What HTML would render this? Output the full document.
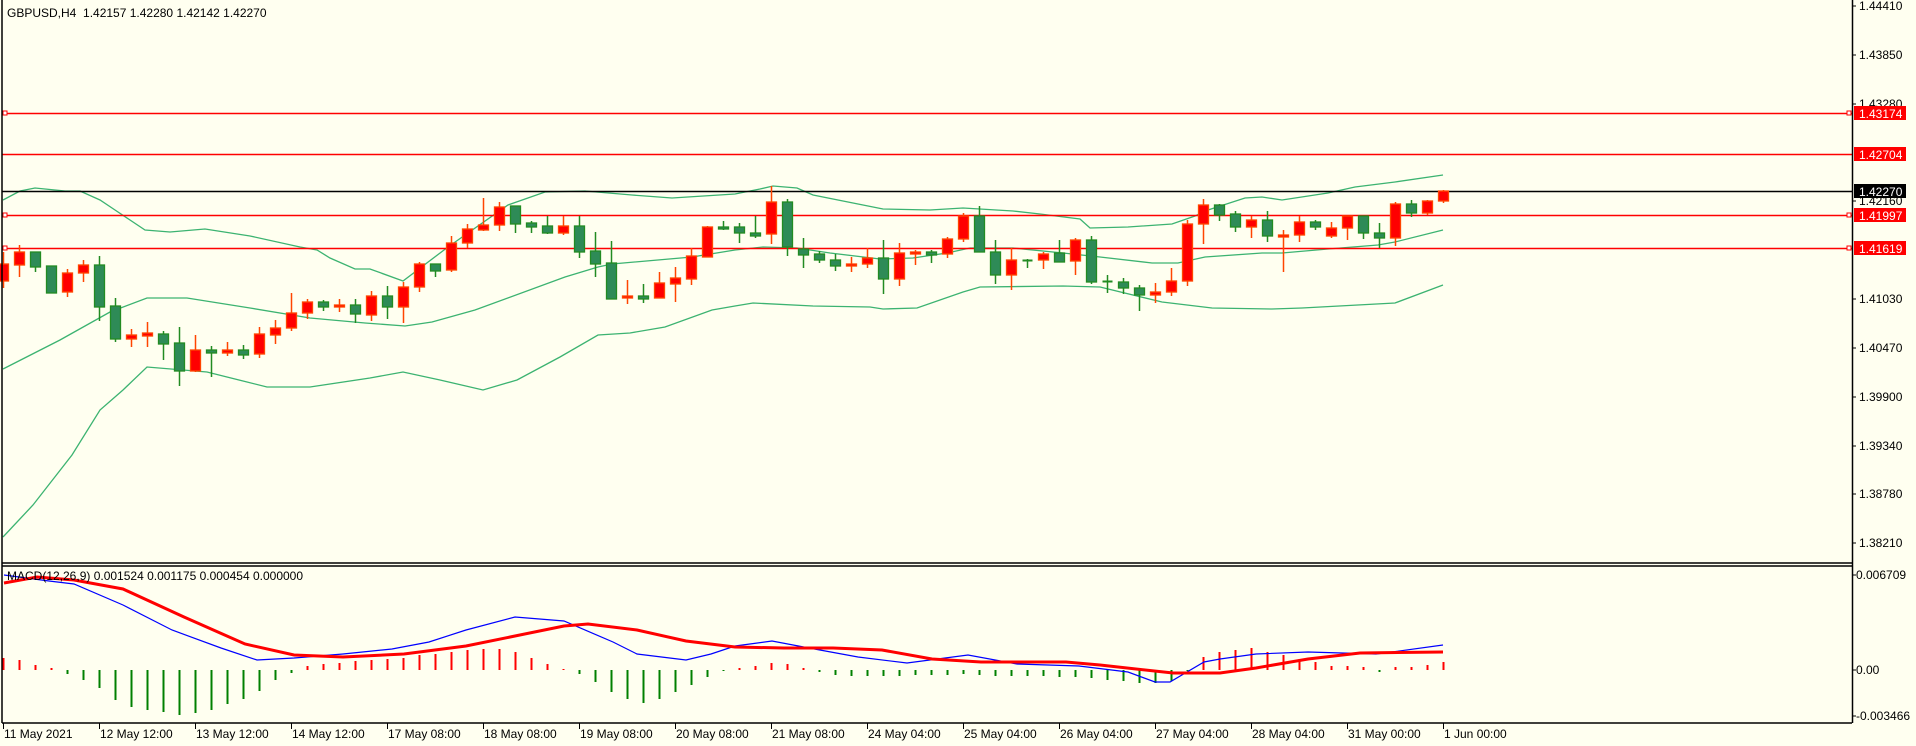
<!DOCTYPE html>
<html><head><meta charset="utf-8"><style>
html,body{margin:0;padding:0;background:#fffff0;}
svg{display:block;font-family:"Liberation Sans",sans-serif;font-size:12px;}
</style></head><body>
<svg id="s" width="1916" height="746" viewBox="0 0 1916 746" xmlns="http://www.w3.org/2000/svg">
<rect x="0" y="0" width="1916" height="746" fill="#fffff0"/>
<g id="bands" fill="none" stroke="#3cb371" stroke-width="1.3"></g>
<g id="hl">
<line x1="2" y1="113.5" x2="1852" y2="113.5" stroke="#ff0000" stroke-width="1.5"/>
<line x1="2" y1="154.5" x2="1852" y2="154.5" stroke="#ff0000" stroke-width="1.5"/>
<line x1="2" y1="191.5" x2="1852" y2="191.5" stroke="#000" stroke-width="1.5"/>
<line x1="2" y1="215.5" x2="1852" y2="215.5" stroke="#ff0000" stroke-width="1.5"/>
<line x1="2" y1="248.5" x2="1852" y2="248.5" stroke="#ff0000" stroke-width="1.5"/>
<g fill="#fff" stroke="#ff0000" stroke-width="1">
<rect x="3" y="111" width="4" height="4"/><rect x="3" y="213" width="4" height="4"/><rect x="3" y="246" width="4" height="4"/>
<rect x="1847" y="111" width="4" height="4"/><rect x="1847" y="213" width="4" height="4"/><rect x="1847" y="246" width="4" height="4"/>
</g>
</g>
<g id="candles"></g>
<g id="macd"></g>
<!-- frames -->
<g stroke="#000" stroke-width="1.5" fill="none">
<line x1="2" y1="0" x2="2" y2="723"/>
<line x1="1852.5" y1="0" x2="1852.5" y2="723"/>
<line x1="2" y1="563" x2="1852" y2="563"/>
<line x1="2" y1="566" x2="1852" y2="566"/>
<line x1="2" y1="723" x2="1852" y2="723"/>
</g>
<g id="ticks" stroke="#000" stroke-width="1"></g>
<text x="7" y="17" fill="#000">GBPUSD,H4&#160; 1.42157 1.42280 1.42142 1.42270</text>
<text x="7" y="580" fill="#000">MACD(12,26,9) 0.001524 0.001175 0.000454 0.000000</text>
<g fill="#000" id="pl">
<text x="1859" y="10">1.44410</text>
<text x="1859" y="59">1.43850</text>
<text x="1859" y="108">1.43280</text>
<text x="1859" y="205">1.42160</text>
<text x="1859" y="303">1.41030</text>
<text x="1859" y="352">1.40470</text>
<text x="1859" y="401">1.39900</text>
<text x="1859" y="450">1.39340</text>
<text x="1859" y="498">1.38780</text>
<text x="1859" y="547">1.38210</text>
<text x="1856" y="579">0.006709</text>
<text x="1856" y="674">0.00</text>
<text x="1856" y="720">-0.003466</text>
</g>
<g>
<rect x="1854" y="106" width="52" height="14" fill="#ff0000"/><text x="1859" y="118" fill="#fff">1.43174</text>
<rect x="1854" y="147" width="52" height="14" fill="#ff0000"/><text x="1859" y="159" fill="#fff">1.42704</text>
<rect x="1854" y="184" width="52" height="14" fill="#000"/><text x="1859" y="196" fill="#fff">1.42270</text>
<rect x="1854" y="208" width="52" height="14" fill="#ff0000"/><text x="1859" y="220" fill="#fff">1.41997</text>
<rect x="1854" y="241" width="52" height="14" fill="#ff0000"/><text x="1859" y="253" fill="#fff">1.41619</text>
</g>
<g fill="#000">
<text x="4" y="738">11 May 2021</text>
<text x="100" y="738">12 May 12:00</text>
<text x="196" y="738">13 May 12:00</text>
<text x="292" y="738">14 May 12:00</text>
<text x="388" y="738">17 May 08:00</text>
<text x="484" y="738">18 May 08:00</text>
<text x="580" y="738">19 May 08:00</text>
<text x="676" y="738">20 May 08:00</text>
<text x="772" y="738">21 May 08:00</text>
<text x="868" y="738">24 May 04:00</text>
<text x="964" y="738">25 May 04:00</text>
<text x="1060" y="738">26 May 04:00</text>
<text x="1156" y="738">27 May 04:00</text>
<text x="1252" y="738">28 May 04:00</text>
<text x="1348" y="738">31 May 00:00</text>
<text x="1444" y="738">1 Jun 00:00</text>
</g>
</svg>
<script>
var NS="http://www.w3.org/2000/svg";
function el(p,t,a){var e=document.createElementNS(NS,t);for(var k in a)e.setAttribute(k,a[k]);p.appendChild(e);return e;}
function pts(a){return a.map(function(p){return p[0]+","+p[1]}).join(" ");}
var bands=document.getElementById("bands");
var up=[[3,200],[20,191],[35,188],[65,191],[80,191],[100,200],[115,210],[145,230],[170,232],[205,229],[250,236],[300,247],[317,250],[330,258],[355,269],[370,269],[403,281],[448,247],[508,205],[545,192],[585,191],[632,195],[672,198],[735,194],[760,189],[773,186],[797,188],[813,195],[863,205],[883,209],[930,210],[963,208],[1013,211],[1040,214],[1080,219],[1090,228],[1128,227],[1172,224],[1195,216],[1208,210],[1245,198],[1262,197],[1282,200],[1328,193],[1355,187],[1395,182],[1443,175]];
var mid=[[3,369],[60,340],[110,312],[147,298],[187,298],[250,308],[310,318],[365,323],[405,326],[432,322],[475,310],[565,277],[598,267],[612,264],[692,257],[735,250],[763,247],[797,248],[830,253],[880,259],[913,258],[947,253],[970,248],[1013,248],[1063,253],[1100,257],[1152,263],[1178,263],[1205,257],[1262,253],[1282,253],[1328,249],[1378,245],[1395,242],[1443,230]];
var lo=[[3,537],[33,505],[72,455],[100,410],[123,390],[147,367],[207,372],[267,387],[310,387],[370,378],[403,372],[440,380],[483,390],[517,380],[560,357],[598,335],[630,333],[665,327],[712,310],[735,306],[753,303],[813,306],[870,307],[883,309],[917,308],[963,292],[980,287],[1063,286],[1100,287],[1162,302],[1212,308],[1272,309],[1302,308],[1395,303],[1443,285]];
[up,mid,lo].forEach(function(a){el(bands,"polyline",{points:pts(a)});});
// candles: [bull, bodyTop, bodyBot, wickTop, wickBot]
var C=[[1,264,281,252,288],[1,252,265,245,277],[0,252,267,252,272],[0,266,293,266,293],[1,273,292,269,297],[1,265,273,260,282],[0,265,307,256,321],[0,306,339,298,342],[1,335,339,329,347],[1,333,336,322,347],
[0,334,344,331,360],[0,343,371,327,386],[1,350,371,335,372],[0,350,353,346,377],[1,350,353,342,356],[0,350,355,345,359],[1,334,354,327,358],[1,328,335,320,344],[1,313,328,293,331],[1,302,313,299,319],
[0,302,307,300,311],[1,305,307,299,312],[0,305,314,299,323],[1,296,315,291,321],[0,296,307,286,319],[1,287,307,282,323],[1,264,287,262,292],[0,264,271,264,277],[1,243,270,236,272],[1,229,243,224,248],
[1,225,230,198,231],[1,207,225,202,231],[0,206,224,206,233],[0,223,227,221,233],[0,226,233,216,234],[1,226,233,216,235],[0,226,252,216,258],[0,251,264,232,277],[0,263,299,241,299],[1,296,298,280,304],
[0,296,299,284,303],[1,283,298,272,298],[1,278,284,267,302],[1,256,279,248,285],[1,227,257,226,257],[0,227,229,221,230],[0,227,233,223,243],[0,233,236,216,238],[1,202,234,186,244],[0,202,247,199,256],
[0,249,255,238,268],[0,254,260,251,263],[0,260,266,254,271],[1,264,266,257,272],[1,258,264,248,268],[0,258,279,240,294],[1,253,279,243,286],[1,252,254,250,265],[0,252,255,250,263],[1,239,254,237,258],
[1,216,239,213,242],[0,216,252,206,252],[0,252,275,240,284],[1,260,275,248,290],[0,260,261,259,268],[1,254,260,252,269],[0,253,262,240,262],[1,240,261,238,275],[0,240,282,236,284],[0,281,282,275,293],
[0,282,288,278,294],[0,288,295,285,311],[1,292,295,283,303],[1,281,292,268,296],[1,224,281,220,286],[1,205,224,199,244],[0,205,215,204,221],[0,214,227,211,232],[1,220,227,216,238],[0,220,236,211,242],
[1,235,237,230,272],[1,222,235,216,242],[0,222,227,220,230],[1,228,236,222,238],[1,216,228,216,240],[0,216,233,216,239],[0,233,238,223,248],[1,204,238,202,246],[0,204,213,200,217],[1,201,213,200,215],[1,191,201,190,203]];
var cg=document.getElementById("candles");
C.forEach(function(c,k){
  var x=3.5+16*k;
  var wc=c[0]?"#ff4500":"#228b22";
  el(cg,"line",{x1:x,y1:c[3],x2:x,y2:c[4],stroke:wc,"stroke-width":1.5});
  var h=Math.max(c[2]-c[1],1);
  if(c[2]-c[1]<=1){el(cg,"line",{x1:x-5,y1:c[1]+0.5,x2:x+5,y2:c[1]+0.5,stroke:wc,"stroke-width":2});}
  else el(cg,"rect",{x:x-5,y:c[1],width:10,height:h,fill:c[0]?"#ff0000":"#2e8b57",stroke:wc,"stroke-width":1.3});
});
var H=[12,10,5,2,-4,-10,-18,-30,-37,-40,-42,-45,-43,-40,-34,-29,-21,-10,-3,4,6,7,9,10,11,12,15,16,18,20,21,21,18,12,6,1,-4,-12,-22,-29,-33,-29,-22,-15,-7,-1,2,4,7,6,2,-2,-5,-6,-6,-6,-6,-5,-5,-5,-4,-5,-6,-6,-6,-6,-7,-7,-8,-10,-11,-13,-13,-11,-1,13,18,20,22,18,15,11,8,4,4,3,-2,3,3,5,8];
var mg=document.getElementById("macd");
H.forEach(function(v,k){var x=3.5+16*k;el(mg,"line",{x1:x,y1:670,x2:x,y2:670-v,stroke:v>=0?"#ff0000":"#008000","stroke-width":2});});
var blue=[[4,575],[49,581],[74,584],[123,605],[172,630],[221,648],[257,660],[294,658],[343,654],[392,649],[429,642],[466,630],[515,617],[564,621],[613,642],[637,654],[686,660],[711,654],[735,646],[772,641],[809,648],[858,657],[907,663],[968,655],[1017,664],[1079,666],[1128,672],[1155,682],[1170,682],[1204,662],[1220,659],[1256,654],[1308,652],[1376,654],[1392,652],[1443,645]];
var red=[[4,583],[37,577],[74,580],[123,589],[184,617],[245,644],[294,655],[343,657],[404,654],[466,646],[515,636],[564,626],[588,624],[637,630],[686,641],[735,647],[784,648],[833,648],[882,650],[932,659],[981,662],[1066,662],[1100,665],[1173,673],[1220,673],[1256,668],[1308,659],[1360,653],[1443,652]];
el(mg,"polyline",{points:pts(blue),fill:"none",stroke:"#0000ff","stroke-width":1.2});
el(mg,"polyline",{points:pts(red),fill:"none",stroke:"#ff0000","stroke-width":3});
var tg=document.getElementById("ticks");
for(var i=0;i<16;i++){var x=3.5+96*i;el(tg,"line",{x1:x,y1:723,x2:x,y2:729});}
[6,55,104,201,299,348,397,446,494,543,575,670,716].forEach(function(y){el(tg,"line",{x1:1852,y1:y,x2:1856,y2:y});});
</script>
</body></html>
